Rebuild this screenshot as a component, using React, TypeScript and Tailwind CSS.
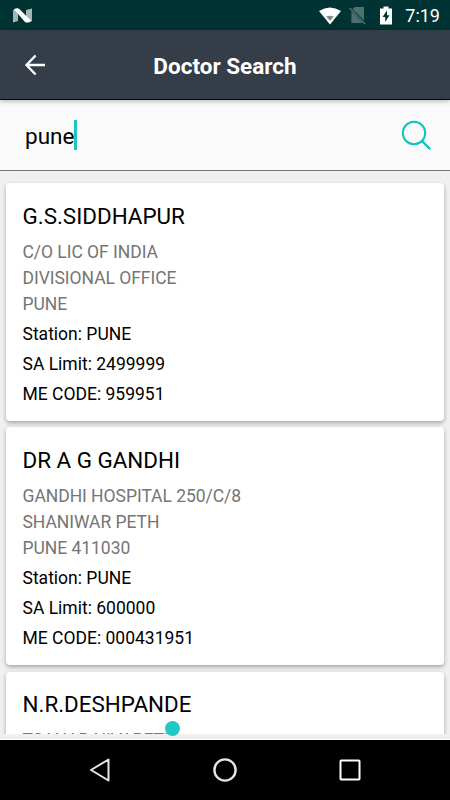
interface Doctor {
  name: string;
  address: string[];
  station: string;
  saLimit: string;
  meCode: string;
}

const doctors: Doctor[] = [
  {
    name: "G.S.SIDDHAPUR",
    address: ["C/O LIC OF INDIA", "DIVISIONAL OFFICE", "PUNE"],
    station: "PUNE",
    saLimit: "2499999",
    meCode: "959951",
  },
  {
    name: "DR A G GANDHI",
    address: ["GANDHI HOSPITAL 250/C/8", "SHANIWAR PETH", "PUNE 411030"],
    station: "PUNE",
    saLimit: "600000",
    meCode: "000431951",
  },
  {
    name: "N.R.DESHPANDE",
    address: ["TSANAR NIVAPETH"],
    station: "PUNE",
    saLimit: "600000",
    meCode: "000431952",
  },
];

function StatusBar() {
  return (
    <div className="flex h-[30px] shrink-0 items-center bg-[#003333] pr-[10px] pl-[13px] text-white">
      <svg width="19" height="15" viewBox="0 0 19 15">
        <path d="M0 2 5 0.5V13L0 14.5Z M13 2 19 0.5V13L13 14.5Z" fill="#a3b8b6" />
        <path d="M1 1.2Q4 -0.4 6.3 1L18.5 13Q15 15.4 12 14Z" fill="white" />
      </svg>
      <svg className="mt-px mr-[10px] ml-auto" width="24" height="18" viewBox="0 0 24 18">
        <path d="M1 4Q12 -3.2 23 4L12 17.5Z" fill="white" />
        <path d="M8.3 9.6Q12 7.8 15.7 9.6L12 14Z" fill="#7f8d8c" />
      </svg>
      <svg className="-ml-[3px]" width="18" height="19" viewBox="0 0 18 19">
        <path d="M5.5 1H15V14.3L3.6 3.3Z M2.4 5.2 13.7 17H2.4Z" fill="#4d706f" />
        <path d="M0.7 2 16 18" stroke="#4d706f" strokeWidth="1.5" />
      </svg>
      <svg className="ml-[13px]" width="12" height="19" viewBox="0 0 12 19">
        <path d="M3.5 0.5H8.5V2.5H12V18.5H0V2.5H3.5Z" fill="white" />
        <path d="M7 4.5 2.5 11H5.2V16L9.5 9.3H7Z" fill="#003333" />
      </svg>
      <span className="ml-[13px] pt-px text-[18px] leading-[30px]">7:19</span>
    </div>
  );
}

function Header() {
  return (
    <header className="z-10 grid h-[70px] shrink-0 grid-cols-[70px_1fr_70px] items-center border-b border-[#020814] bg-[#343d48] shadow-[0_1px_5px_rgba(0,0,0,0.3)]">
      <svg className="ml-[24px]" width="22" height="22" viewBox="0 0 22 22" fill="none" stroke="white" strokeWidth="2.4">
        <path d="M11.6 1.5 2.5 11 11.6 20.5M2.5 11H21" />
      </svg>
      <h1 className="pt-[4px] text-center text-[22.5px] font-bold text-white">Doctor Search</h1>
    </header>
  );
}

function SearchField() {
  return (
    <div className="flex h-[71px] shrink-0 items-center border-b border-[#777] bg-[#fafafa] pr-[19px] pl-[25px]">
      <span className="pt-[3px] text-[22.5px] text-black">pune</span>
      <span className="h-[30px] w-[2.5px] bg-[#1cc5c0]" />
      <svg className="ml-auto" width="31" height="31" viewBox="0 0 31 31" fill="none" stroke="#0ac3bc" strokeWidth="2">
        <circle cx="14" cy="13" r="11.2" />
        <path d="M22 21 29.5 28.5" strokeWidth="2.4" strokeLinecap="round" />
      </svg>
    </div>
  );
}

function DoctorCard({ doctor }: { doctor: Doctor }) {
  return (
    <article className="shrink-0 rounded-[4px] bg-white px-[16.5px] pt-[17.8px] pb-[12.2px] text-[17.5px] shadow-[0_2px_4px_rgba(0,0,0,0.32)]">
      <h2 className="mb-[8px] text-[22.4px] leading-[30px] text-black">{doctor.name}</h2>
      <div className="mb-[2px] leading-[26px] tracking-[-0.04px] text-[#757575]">
        {doctor.address.map((line) => (
          <p key={line}>{line}</p>
        ))}
      </div>
      <div className="leading-[30px] text-black">
        <p>Station: {doctor.station}</p>
        <p>SA Limit: {doctor.saLimit}</p>
        <p>ME CODE: {doctor.meCode}</p>
      </div>
    </article>
  );
}

function NavigationBar() {
  return (
    <nav className="flex h-[60px] shrink-0 items-center justify-between bg-black px-[88px]">
      <svg width="24" height="26" viewBox="0 0 24 26" fill="none" stroke="#e6e6e6" strokeWidth="2" strokeLinejoin="round">
        <path d="M20.5 2.5V23.5L3 13Z" />
      </svg>
      <svg width="26" height="26" viewBox="0 0 26 26" fill="none" stroke="#e6e6e6" strokeWidth="2.4">
        <circle cx="13" cy="13" r="10.6" />
      </svg>
      <svg width="24" height="24" viewBox="0 0 24 24" fill="none" stroke="white" strokeWidth="2">
        <rect x="2.5" y="2.5" width="19" height="19" rx="0.7" />
      </svg>
    </nav>
  );
}

export default function App() {
  return (
    <div className="relative flex h-[800px] w-[450px] flex-col overflow-hidden bg-[#f0f0f0] font-[Roboto,sans-serif]">
      <StatusBar />
      <Header />
      <SearchField />
      <main className="flex h-[563px] shrink-0 flex-col gap-[6.3px] overflow-hidden px-[6px] pt-[12px]">
        {doctors.map((doctor) => (
          <DoctorCard key={doctor.name} doctor={doctor} />
        ))}
      </main>
      <div className="h-[6px] shrink-0 border-b border-white bg-[#f0f0f0]" />
      <NavigationBar />
      {/* bouncing loader dot */}
      <span className="absolute top-[721px] left-[165px] size-[15px] rounded-full bg-[#1fc8c2]" />
    </div>
  );
}
